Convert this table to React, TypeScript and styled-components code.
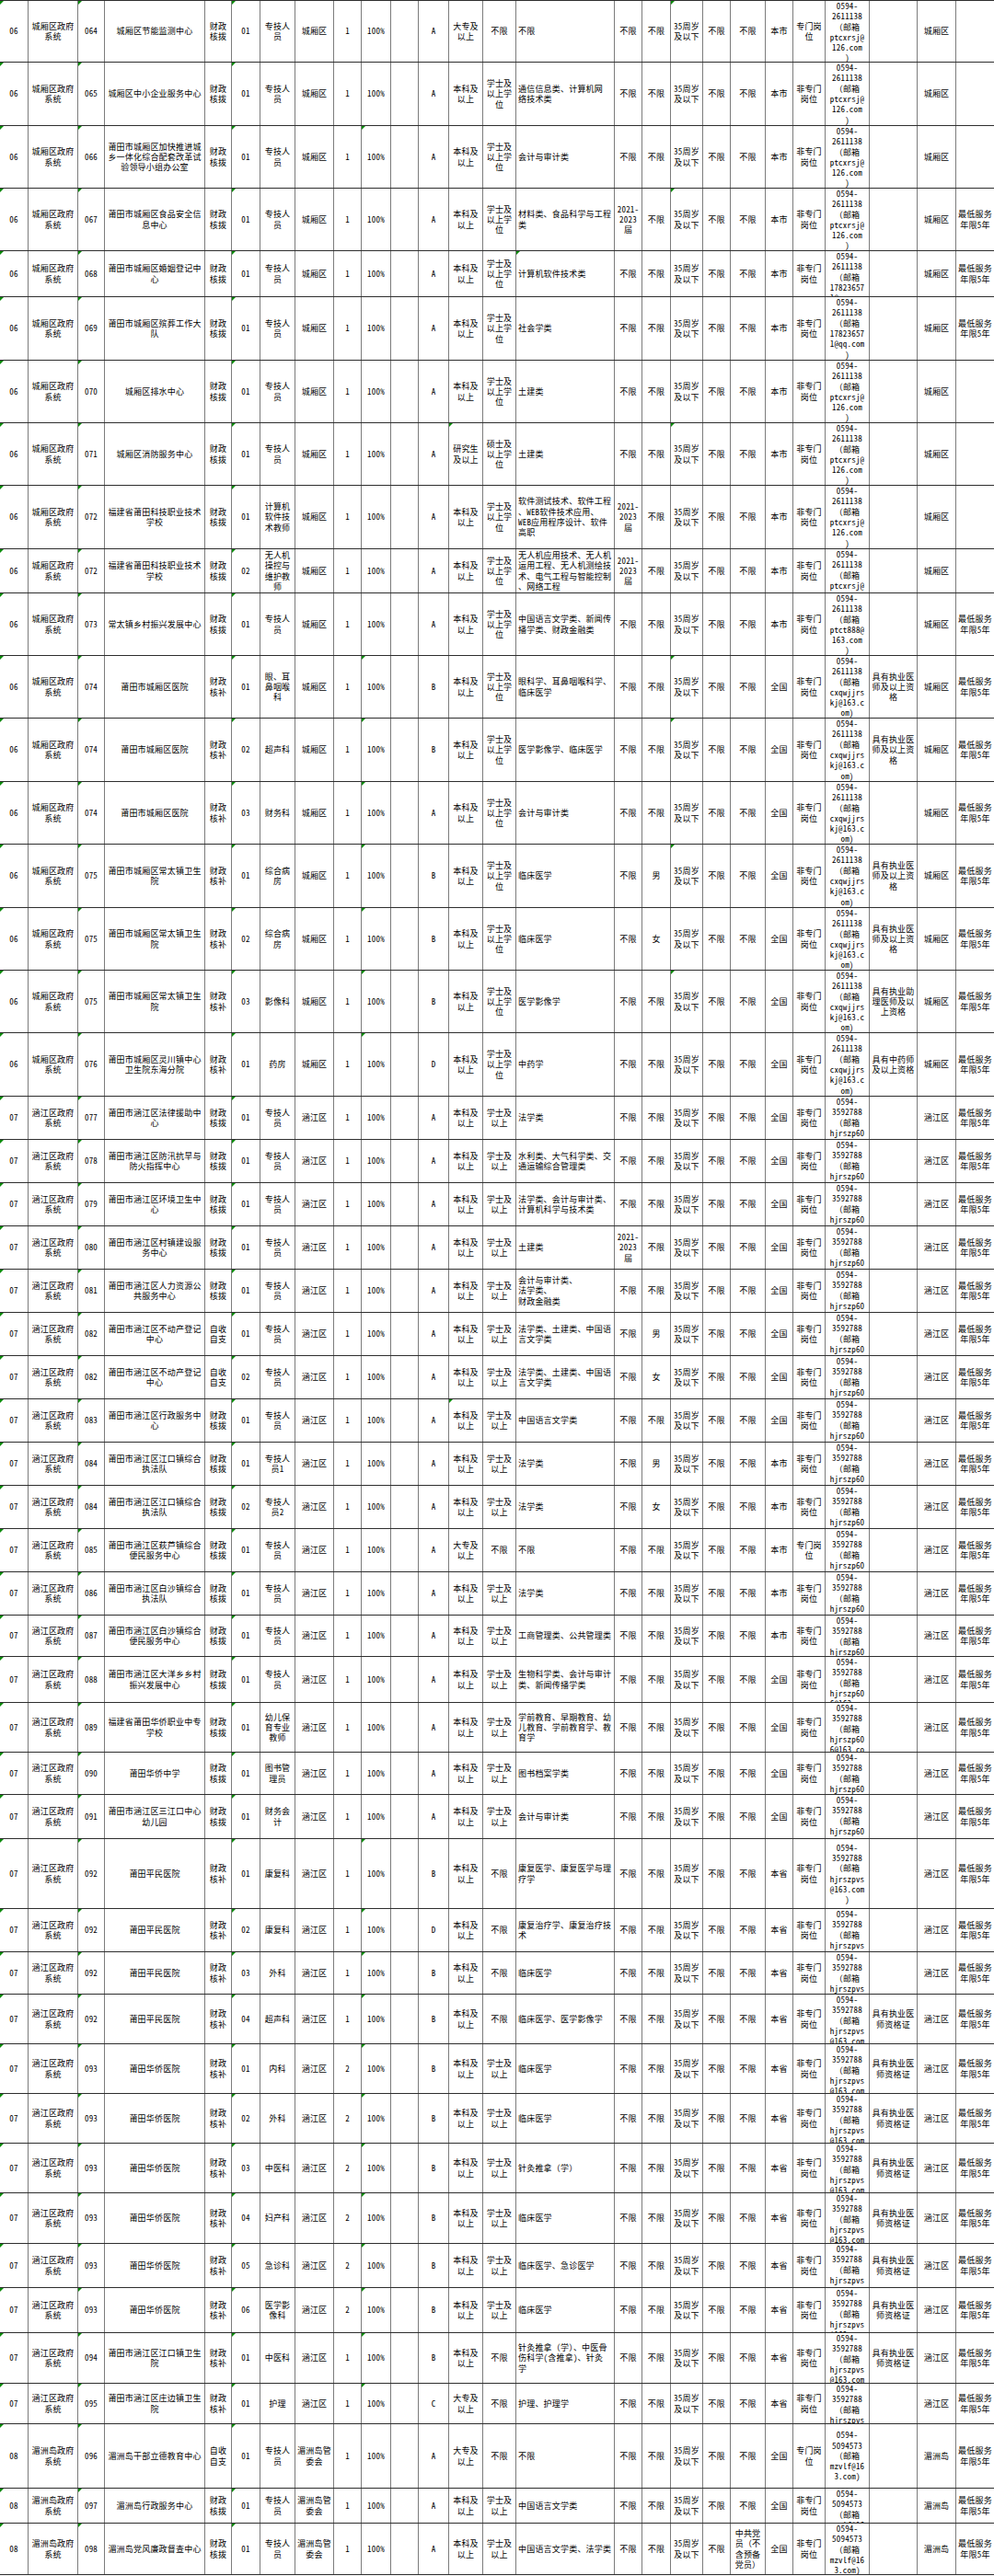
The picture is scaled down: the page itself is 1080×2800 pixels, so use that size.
import React from "react";
import styled, { createGlobalStyle, css } from "styled-components";

const COLS = [31, 54, 29, 109, 29, 31, 38, 42, 30, 32, 30, 33, 37, 36, 107, 30, 31, 35, 30, 38, 30, 35, 48, 52, 42, 41];

const KEYS = [
  "code", "dept", "unit", "uname", "fund", "post", "pname", "loc", "n", "pct", "blank", "cat",
  "edu", "deg", "major", "grad", "sex", "age", "eth", "pol", "hk", "ptype", "contact", "qual", "region", "note",
] as const;

type Key = (typeof KEYS)[number];
type RowData = Partial<Record<Key, string>> & { h: number; m?: number[] };

const Global = createGlobalStyle`
  html, body { margin: 0; padding: 0; background: #fff; }
  body {
    font-family: "Noto Sans Mono CJK SC", "Noto Sans CJK SC", "Liberation Mono", monospace;
    color: #000;
  }
`;

const Sheet = styled.div`
  width: 1080px;
  display: flex;
  flex-direction: column;
  border-top: 1px solid #2e2e2e;
`;

const Row = styled.div<{ $h: number }>`
  display: grid;
  grid-template-columns: ${COLS.map((w) => `${w}px`).join(" ")};
  grid-template-rows: minmax(0, 1fr);
  height: ${(p) => p.$h}px;
  box-sizing: border-box;
  border-bottom: 1px solid #2e2e2e;
`;

const Cell = styled.div<{ $tight?: boolean; $mark?: boolean }>`
  position: relative;
  display: flex;
  min-width: 0;
  min-height: 0;
  overflow: hidden;
  box-sizing: border-box;
  border-right: 1px solid #7c7c7c;
  padding: 0 ${(p) => (p.$tight ? 1 : 2)}px;
  font-size: 9px;
  line-height: 11.3px;
  letter-spacing: 0.2px;
  &:last-child { border-right: none; }
  ${(p) =>
    p.$mark &&
    css`
      &::before {
        content: "";
        position: absolute;
        left: 0;
        top: 0;
        border-top: 4px solid #0c8a0c;
        border-right: 4px solid transparent;
      }
    `}
`;

const Text = styled.span<{ $left?: boolean; $pre?: boolean }>`
  margin: auto ${(p) => (p.$left ? "0" : "auto")};
  text-align: ${(p) => (p.$left ? "left" : "center")};
  white-space: ${(p) => (p.$pre ? "pre" : "normal")};
  line-break: anywhere;
  word-break: break-all;
`;

const CX = "0594-\n2611138\n（邮箱\nptcxrsj@\n126.com\n)";
const CXQ = "0594-\n2611138\n（邮箱\n17823657\n1@qq.com\n)";
const CX8 = "0594-\n2611138\n（邮箱\nptct888@\n163.com\n)";
const CXH = "0594-\n2611138\n（邮箱\ncxqwjjrs\nkj@163.c\nom)";
const HJ = "0594-\n3592788\n（邮箱\nhjrszp60\n6@163.co\nm)";
const HJV = "0594-\n3592788\n（邮箱\nhjrszpvs\n@163.com\n)";
const MZ = "0594-\n5094573\n（邮箱\nmzvlf@16\n3.com)";
const NOTE = "最低服务年限5年";
const Q1 = "具有执业医师及以上资格";
const Q2 = "具有执业医师资格证";

const common: Partial<Record<Key, string>> = {
  post: "01",
  pname: "专技人员",
  n: "1",
  pct: "100%",
  blank: "",
  cat: "A",
  edu: "本科及以上",
  grad: "不限",
  sex: "不限",
  age: "35周岁及以下",
  eth: "不限",
  pol: "不限",
  ptype: "非专门岗位",
  qual: "",
  note: "",
};

const g6 = (h: number, o: Partial<Record<Key, string>>, m: number[] = []): RowData => ({
  ...common,
  code: "06",
  dept: "城厢区政府系统",
  fund: "财政核拨",
  loc: "城厢区",
  deg: "学士及以上学位",
  hk: "本市",
  contact: CX,
  region: "城厢区",
  ...o,
  h,
  m,
});

const g6m = (h: number, o: Partial<Record<Key, string>>, m: number[] = []): RowData =>
  g6(h, { fund: "财政核补", hk: "全国", contact: CXH, note: NOTE, ...o }, [9, ...m]);

const g7 = (h: number, o: Partial<Record<Key, string>>, m: number[] = []): RowData => ({
  ...common,
  code: "07",
  dept: "涵江区政府系统",
  fund: "财政核拨",
  loc: "涵江区",
  deg: "学士及以上",
  hk: "全国",
  contact: HJ,
  region: "涵江区",
  note: NOTE,
  ...o,
  h,
  m,
});

const g7m = (h: number, o: Partial<Record<Key, string>>): RowData =>
  g7(h, { fund: "财政核补", hk: "本省", contact: HJV, cat: "B", ...o }, [9]);

const g8 = (h: number, o: Partial<Record<Key, string>>): RowData => ({
  ...common,
  code: "08",
  dept: "湄洲岛政府系统",
  fund: "财政核拨",
  loc: "湄洲岛管委会",
  deg: "学士及以上",
  hk: "全国",
  contact: MZ,
  region: "湄洲岛",
  note: NOTE,
  ...o,
  h,
  m: [],
});

const ROWS: RowData[] = [
  g6(67, { unit: "064", uname: "城厢区节能监测中心", edu: "大专及以上", deg: "不限", major: "不限", ptype: "专门岗位" }, [17]),
  g6(69, { unit: "065", uname: "城厢区中小企业服务中心", major: "通信信息类、计算机网\n络技术类" }),
  g6(68, { unit: "066", uname: "莆田市城厢区加快推进城乡一体化综合配套改革试验领导小组办公室", major: "会计与审计类" }, [9]),
  g6(68, { unit: "067", uname: "莆田市城厢区食品安全信息中心", major: "材料类、食品科学与工程\n类", grad: "2021-2023届", note: NOTE }, [17]),
  g6(50, { unit: "068", uname: "莆田市城厢区婚姻登记中心", major: "计算机软件技术类", contact: CXQ, note: NOTE }, [14]),
  g6(69, { unit: "069", uname: "莆田市城厢区殡葬工作大队", major: "社会学类", contact: CXQ, note: NOTE }),
  g6(68, { unit: "070", uname: "城厢区排水中心", major: "土建类" }),
  g6(68, { unit: "071", uname: "城厢区消防服务中心", edu: "研究生及以上", deg: "硕士及以上学位", major: "土建类" }, [12, 17]),
  g6(69, {
    unit: "072",
    uname: "福建省莆田科技职业技术学校",
    pname: "计算机软件技术教师",
    major: "软件测试技术、软件工程\n、WEB软件技术应用、\nWEB应用程序设计、软件\n高职",
    grad: "2021-2023届",
  }),
  g6(48, {
    unit: "072",
    uname: "福建省莆田科技职业技术学校",
    post: "02",
    pname: "无人机操控与维护教师",
    major: "无人机应用技术、无人机\n运用工程、无人机测绘技\n术、电气工程与智能控制\n、网络工程",
    grad: "2021-2023届",
  }),
  g6(68, { unit: "073", uname: "常太镇乡村振兴发展中心", major: "中国语言文学类、新闻传\n播学类、财政金融类", contact: CX8, note: NOTE }),
  g6m(68, { unit: "074", uname: "莆田市城厢区医院", pname: "眼、耳鼻咽喉科", cat: "B", major: "眼科学、耳鼻咽喉科学、\n临床医学", qual: Q1 }, [17]),
  g6m(69, { unit: "074", uname: "莆田市城厢区医院", post: "02", pname: "超声科", cat: "B", major: "医学影像学、临床医学", qual: Q1 }, [17]),
  g6m(68, { unit: "074", uname: "莆田市城厢区医院", post: "03", pname: "财务科", major: "会计与审计类" }),
  g6m(69, { unit: "075", uname: "莆田市城厢区常太镇卫生院", pname: "综合病房", cat: "B", major: "临床医学", sex: "男", qual: Q1 }, [17]),
  g6m(68, { unit: "075", uname: "莆田市城厢区常太镇卫生院", post: "02", pname: "综合病房", cat: "B", major: "临床医学", sex: "女", qual: Q1 }),
  g6m(68, { unit: "075", uname: "莆田市城厢区常太镇卫生院", post: "03", pname: "影像科", cat: "B", major: "医学影像学", qual: "具有执业助理医师及以上资格" }, [17]),
  g6m(69, { unit: "076", uname: "莆田市城厢区灵川镇中心卫生院东海分院", pname: "药房", cat: "D", major: "中药学", qual: "具有中药师及以上资格" }),
  g7(47, { unit: "077", uname: "莆田市涵江区法律援助中心", major: "法学类" }),
  g7(47, { unit: "078", uname: "莆田市涵江区防汛抗旱与防火指挥中心", major: "水利类、大气科学类、交\n通运输综合管理类" }),
  g7(47, { unit: "079", uname: "莆田市涵江区环境卫生中心", major: "法学类、会计与审计类、\n计算机科学与技术类" }),
  g7(47, { unit: "080", uname: "莆田市涵江区村镇建设服务中心", major: "土建类", grad: "2021-2023届" }),
  g7(47, { unit: "081", uname: "莆田市涵江区人力资源公共服务中心", major: "会计与审计类、\n法学类、\n财政金融类" }),
  g7(47, { unit: "082", uname: "莆田市涵江区不动产登记中心", fund: "自收自支", major: "法学类、土建类、中国语\n言文学类", sex: "男" }),
  g7(47, { unit: "082", uname: "莆田市涵江区不动产登记中心", fund: "自收自支", post: "02", major: "法学类、土建类、中国语\n言文学类", sex: "女" }),
  g7(47, { unit: "083", uname: "莆田市涵江区行政服务中心", major: "中国语言文学类" }, [12]),
  g7(47, { unit: "084", uname: "莆田市涵江区江口镇综合执法队", pname: "专技人员1", major: "法学类", sex: "男", hk: "本市" }),
  g7(47, { unit: "084", uname: "莆田市涵江区江口镇综合执法队", post: "02", pname: "专技人员2", major: "法学类", sex: "女", hk: "本市" }),
  g7(47, { unit: "085", uname: "莆田市涵江区萩芦镇综合便民服务中心", edu: "大专及以上", deg: "不限", major: "不限", hk: "本市", ptype: "专门岗位" }),
  g7(47, { unit: "086", uname: "莆田市涵江区白沙镇综合执法队", major: "法学类", hk: "本市" }),
  g7(45, { unit: "087", uname: "莆田市涵江区白沙镇综合便民服务中心", major: "工商管理类、公共管理类", hk: "本市" }),
  g7(50, { unit: "088", uname: "莆田市涵江区大洋乡乡村振兴发展中心", major: "生物科学类、会计与审计\n类、新闻传播学类" }),
  g7(54, { unit: "089", uname: "福建省莆田华侨职业中专学校", pname: "幼儿保育专业教师", major: "学前教育、早期教育、幼\n儿教育、学前教育学、教\n育学" }),
  g7(46, { unit: "090", uname: "莆田华侨中学", pname: "图书管理员", major: "图书档案学类" }),
  g7(48, { unit: "091", uname: "莆田市涵江区三江口中心幼儿园", pname: "财务会计", major: "会计与审计类" }),
  g7m(76, { unit: "092", uname: "莆田平民医院", pname: "康复科", deg: "不限", major: "康复医学、康复医学与理\n疗学" }),
  g7m(47, { unit: "092", uname: "莆田平民医院", post: "02", pname: "康复科", cat: "D", deg: "不限", major: "康复治疗学、康复治疗技\n术" }),
  g7m(46, { unit: "092", uname: "莆田平民医院", post: "03", pname: "外科", deg: "不限", major: "临床医学" }),
  g7m(54, { unit: "092", uname: "莆田平民医院", post: "04", pname: "超声科", deg: "不限", major: "临床医学、医学影像学", qual: Q2 }),
  g7m(54, { unit: "093", uname: "莆田华侨医院", pname: "内科", n: "2", major: "临床医学", qual: Q2 }),
  g7m(54, { unit: "093", uname: "莆田华侨医院", post: "02", pname: "外科", n: "2", major: "临床医学", qual: Q2 }),
  g7m(54, { unit: "093", uname: "莆田华侨医院", post: "03", pname: "中医科", n: "2", major: "针灸推拿（学）", qual: Q2 }),
  g7m(55, { unit: "093", uname: "莆田华侨医院", post: "04", pname: "妇产科", n: "2", major: "临床医学", qual: Q2 }),
  g7m(48, { unit: "093", uname: "莆田华侨医院", post: "05", pname: "急诊科", n: "2", major: "临床医学、急诊医学", qual: Q2 }),
  g7m(49, { unit: "093", uname: "莆田华侨医院", post: "06", pname: "医学影像科", n: "2", major: "临床医学", qual: Q2 }),
  g7m(55, {
    unit: "094",
    uname: "莆田市涵江区江口镇卫生院",
    pname: "中医科",
    deg: "不限",
    major: "针灸推拿（学）、中医骨\n伤科学(含推拿)、针灸\n学",
    qual: Q2,
  }),
  g7m(44, { unit: "095", uname: "莆田市涵江区庄边镇卫生院", pname: "护理", cat: "C", edu: "大专及以上", deg: "不限", major: "护理、护理学" }),
  g8(70, { unit: "096", uname: "湄洲岛干部立德教育中心", fund: "自收自支", edu: "大专及以上", deg: "不限", major: "不限", ptype: "专门岗位" }),
  g8(38, { unit: "097", uname: "湄洲岛行政服务中心", major: "中国语言文学类" }),
  g8(56, { unit: "098", uname: "湄洲岛党风廉政督查中心", major: "中国语言文学类、法学类", pol: "中共党员（不含预备党员）" }),
];

const BASE_MARKS = [0, 2, 5];

export default function App() {
  return (
    <>
      <Global />
      <Sheet>
        {ROWS.map((r, ri) => {
          const marks = [...BASE_MARKS, ...(r.m ?? [])];
          return (
            <Row key={ri} $h={r.h}>
              {KEYS.map((k, ci) => (
                <Cell key={ci} $mark={marks.includes(ci)} $tight={ci === 25 || ci === 7}>
                  <Text $left={ci === 14} $pre={ci === 14 || ci === 22}>
                    {r[k] ?? ""}
                  </Text>
                </Cell>
              ))}
            </Row>
          );
        })}
      </Sheet>
    </>
  );
}
